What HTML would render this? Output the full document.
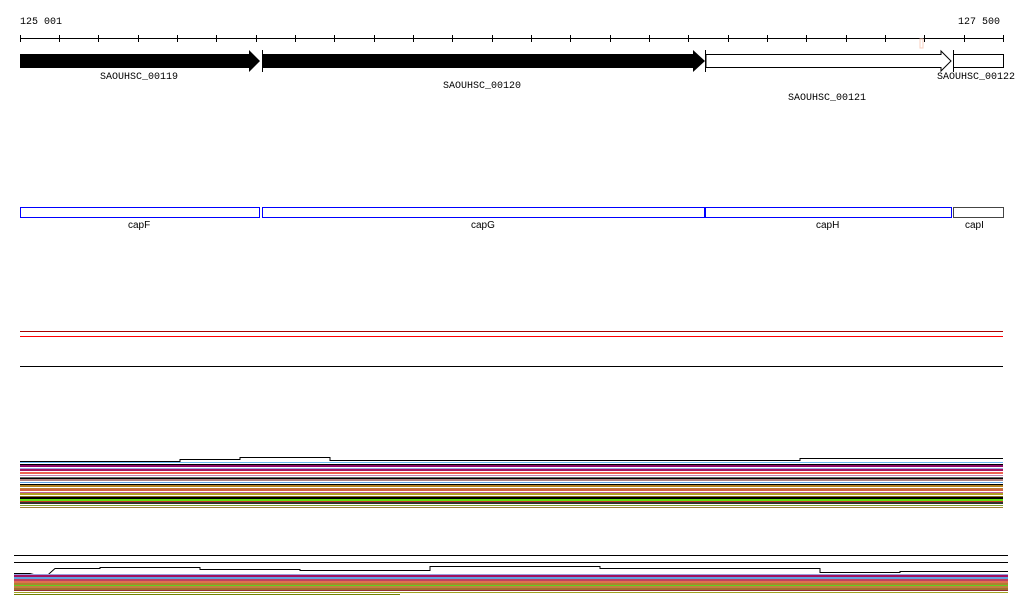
<!DOCTYPE html>
<html><head><meta charset="utf-8"><style>
html,body{margin:0;padding:0;background:#fff;width:1024px;height:611px;overflow:hidden}
text{font-family:"Liberation Mono",monospace;font-size:10px;fill:#000}
.s{font-family:"Liberation Sans",sans-serif;font-size:10px}
</style></head><body>
<svg width="1024" height="611" xmlns="http://www.w3.org/2000/svg" shape-rendering="crispEdges">
<text x="20" y="24">125 001</text>
<text x="958" y="24">127 500</text>
<line x1="20" y1="38.5" x2="1003" y2="38.5" stroke="#000"/>
<g stroke="#000">
<line x1="20.5" y1="35" x2="20.5" y2="42"/><line x1="59.5" y1="35" x2="59.5" y2="42"/><line x1="98.5" y1="35" x2="98.5" y2="42"/><line x1="138.5" y1="35" x2="138.5" y2="42"/><line x1="177.5" y1="35" x2="177.5" y2="42"/><line x1="216.5" y1="35" x2="216.5" y2="42"/><line x1="256.5" y1="35" x2="256.5" y2="42"/><line x1="295.5" y1="35" x2="295.5" y2="42"/><line x1="334.5" y1="35" x2="334.5" y2="42"/><line x1="374.5" y1="35" x2="374.5" y2="42"/><line x1="413.5" y1="35" x2="413.5" y2="42"/><line x1="452.5" y1="35" x2="452.5" y2="42"/><line x1="492.5" y1="35" x2="492.5" y2="42"/><line x1="531.5" y1="35" x2="531.5" y2="42"/><line x1="570.5" y1="35" x2="570.5" y2="42"/><line x1="610.5" y1="35" x2="610.5" y2="42"/><line x1="649.5" y1="35" x2="649.5" y2="42"/><line x1="688.5" y1="35" x2="688.5" y2="42"/><line x1="728.5" y1="35" x2="728.5" y2="42"/><line x1="767.5" y1="35" x2="767.5" y2="42"/><line x1="806.5" y1="35" x2="806.5" y2="42"/><line x1="846.5" y1="35" x2="846.5" y2="42"/><line x1="885.5" y1="35" x2="885.5" y2="42"/><line x1="924.5" y1="35" x2="924.5" y2="42"/><line x1="964.5" y1="35" x2="964.5" y2="42"/><line x1="1003.5" y1="35" x2="1003.5" y2="42"/>
</g>
<rect x="920" y="39" width="3" height="9" fill="none" stroke="#f8d0c0"/>
<polygon points="20,54 249,54 249,50 260,61 249,72 249,68 20,68" fill="#000" shape-rendering="auto"/>
<line x1="262.5" y1="50" x2="262.5" y2="72" stroke="#000"/>
<polygon points="263,54 693,54 693,50 705,61 693,72 693,68 263,68" fill="#000" shape-rendering="auto"/>
<line x1="705.5" y1="50" x2="705.5" y2="72" stroke="#000"/>
<polygon points="706,54.5 941,54.5 941,51 951,61 941,71 941,67.5 706,67.5" fill="#fff" stroke="#000" shape-rendering="auto"/>
<line x1="953.5" y1="50" x2="953.5" y2="72" stroke="#000"/>
<rect x="953.5" y="54.5" width="50" height="13" fill="#fff" stroke="#000"/>
<text x="100" y="79">SAOUHSC_00119</text>
<text x="443" y="88">SAOUHSC_00120</text>
<text x="788" y="100">SAOUHSC_00121</text>
<text x="937" y="79">SAOUHSC_00122</text>
<g fill="none" stroke="#00f">
<rect x="20.5" y="207.5" width="239" height="10"/><rect x="262.5" y="207.5" width="442" height="10"/><rect x="705.5" y="207.5" width="246" height="10"/>
</g>
<rect x="953.5" y="207.5" width="50" height="10" fill="none" stroke="#444"/>
<text class="s" x="128" y="228">capF</text>
<text class="s" x="471" y="228">capG</text>
<text class="s" x="816" y="228">capH</text>
<text class="s" x="965" y="228">capI</text>
<line x1="20" y1="331.5" x2="1003" y2="331.5" stroke="#a00"/>
<line x1="20" y1="336.5" x2="1003" y2="336.5" stroke="#f00"/>
<line x1="20" y1="366.5" x2="1003" y2="366.5" stroke="#000"/>
<g>
<path d="M20 461.5H180V459.5H240V457.5H330V460.5H800V458.5H1003" stroke="#000" fill="none"/>
<line x1="20" y1="462.5" x2="1003" y2="462.5" stroke="#6bb8f0"/>
<line x1="20" y1="464.5" x2="1003" y2="464.5" stroke="#000"/>
<line x1="20" y1="466" x2="1003" y2="466" stroke="#8b0a6a" stroke-width="2"/>
<line x1="20" y1="468.5" x2="1003" y2="468.5" stroke="#9aa0e0"/>
<line x1="20" y1="470" x2="1003" y2="470" stroke="#a01060" stroke-width="2"/>
<line x1="20" y1="473" x2="1003" y2="473" stroke="#f06050" stroke-width="2"/>
<line x1="20" y1="475.5" x2="1003" y2="475.5" stroke="#c080b0"/>
<line x1="20" y1="477.5" x2="1003" y2="477.5" stroke="#666"/>
<line x1="20" y1="478.5" x2="1003" y2="478.5" stroke="#000"/>
<line x1="20" y1="480" x2="1003" y2="480" stroke="#b08080" stroke-width="2"/>
<line x1="20" y1="482.5" x2="1003" y2="482.5" stroke="#60a0e0"/>
<line x1="20" y1="484.5" x2="1003" y2="484.5" stroke="#000"/>
<line x1="20" y1="486" x2="1003" y2="486" stroke="#b08020" stroke-width="2"/>
<line x1="20" y1="488.5" x2="1003" y2="488.5" stroke="#c08030"/>
<line x1="20" y1="490" x2="1003" y2="490" stroke="#d06040" stroke-width="2"/>
<line x1="20" y1="492.5" x2="1003" y2="492.5" stroke="#c060a0"/>
<line x1="20" y1="494" x2="1003" y2="494" stroke="#b0a020" stroke-width="2"/>
<line x1="20" y1="496.5" x2="1003" y2="496.5" stroke="#907020"/>
<line x1="20" y1="498" x2="1003" y2="498" stroke="#000" stroke-width="2"/>
<line x1="20" y1="500" x2="1003" y2="500" stroke="#60e010" stroke-width="2"/>
<line x1="20" y1="501.5" x2="1003" y2="501.5" stroke="#c04020"/>
<line x1="20" y1="503" x2="1003" y2="503" stroke="#303030" stroke-width="2"/>
<line x1="20" y1="505.5" x2="1003" y2="505.5" stroke="#80a030"/>
<line x1="20" y1="507.5" x2="1003" y2="507.5" stroke="#a08030"/>
</g>
<line x1="14" y1="555.5" x2="1008" y2="555.5" stroke="#000"/>
<line x1="14" y1="562.5" x2="1008" y2="562.5" stroke="#000"/>
<g>
<path d="M14 573.5H30L45 577.5L55 568.5H100V567.5H200V569.5H300V570.5H430V566.5H600V568.5H820V572.5H900V571.5H1008" stroke="#000" fill="none" shape-rendering="auto"/>
<line x1="14" y1="574.5" x2="1008" y2="574.5" stroke="#9aa0e0"/>
<line x1="14" y1="576" x2="1008" y2="576" stroke="#a01060" stroke-width="2"/>
<line x1="14" y1="578" x2="1008" y2="578" stroke="#60a0e0" stroke-width="2"/>
<line x1="14" y1="580" x2="1008" y2="580" stroke="#c04060" stroke-width="2"/>
<line x1="14" y1="582" x2="1008" y2="582" stroke="#e07050" stroke-width="2"/>
<line x1="14" y1="584" x2="1008" y2="584" stroke="#b08030" stroke-width="2"/>
<line x1="14" y1="585.5" x2="1008" y2="585.5" stroke="#60d020"/>
<line x1="14" y1="587" x2="1008" y2="587" stroke="#c08040" stroke-width="2"/>
<line x1="14" y1="589" x2="1008" y2="589" stroke="#a07030" stroke-width="2"/>
<line x1="14" y1="590.5" x2="1008" y2="590.5" stroke="#903030"/>
<line x1="14" y1="592.5" x2="1008" y2="592.5" stroke="#a0a020"/>
<line x1="14" y1="594.5" x2="400" y2="594.5" stroke="#708000"/>
</g>
</svg>
</body></html>
